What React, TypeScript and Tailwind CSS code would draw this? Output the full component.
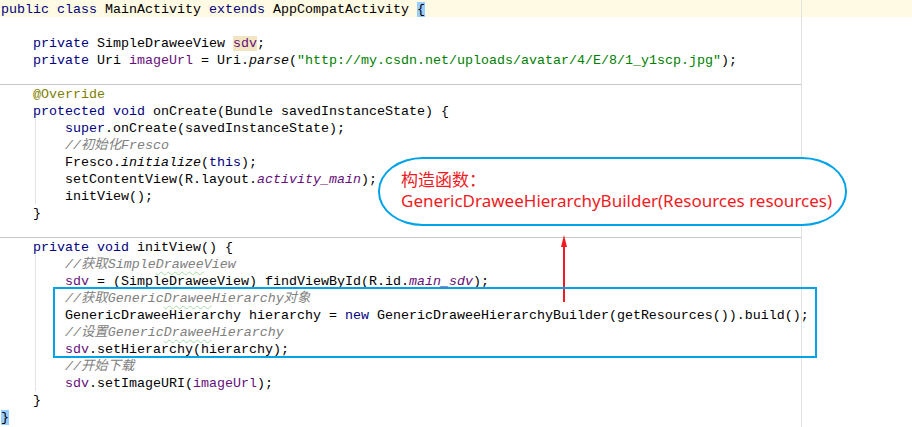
import type { ReactNode } from "react";

// IntelliJ-style colours
const K = ({ children }: { children: ReactNode }) => <span className="text-[#000080]">{children}</span>;
const F = ({ children }: { children: ReactNode }) => <span className="text-[#660e7a]">{children}</span>;
const SF = ({ children }: { children: ReactNode }) => <span className="text-[#660e7a] italic">{children}</span>;
const It = ({ children }: { children: ReactNode }) => <span className="italic">{children}</span>;
const S = ({ children }: { children: ReactNode }) => <span className="text-[#008000]">{children}</span>;
const C = ({ children }: { children: ReactNode }) => <span className="text-[#808080] italic">{children}</span>;
const W = ({ children }: { children: ReactNode }) => (
  <span className="underline decoration-wavy decoration-[#a8d8a8] decoration-1 underline-offset-[3px]">{children}</span>
);

function Line({ children, className = "" }: { children?: ReactNode; className?: string }) {
  return <div className={`h-[17px] pt-[2px] leading-[15px] whitespace-pre pl-px ${className}`}>{children}</div>;
}

function Sep() {
  return <div className="h-[17px] w-[802px] border-b border-[#c8c8c8]" />;
}

export default function App() {
  return (
    <div className="relative w-[912px] h-[427px] overflow-hidden bg-white text-black text-[13.33px] font-['Liberation_Mono','Noto_Sans_CJK_SC',monospace]">
      <div className="flex flex-col">
        <Line className="bg-[#fffae3]">
          <K>public</K> <K>class</K> MainActivity <K>extends</K> AppCompatActivity <span className="bg-[#99ccff]">{"{"}</span>
        </Line>
        <Line />
        <Line>
          {"    "}<K>private</K> SimpleDraweeView <span className="bg-[#f2e6c2] text-[#660e7a]">sdv</span>;
        </Line>
        <Line>
          {"    "}<K>private</K> Uri <F>imageUrl</F> = Uri.<It>parse</It>(<S>"http://my.csdn.net/uploads/avatar/4/E/8/1_y1scp.jpg"</S>);
        </Line>
        <Sep />
        <Line>
          {"    "}<span className="text-[#808000]">@Override</span>
        </Line>
        <Line>
          {"    "}<K>protected</K> <K>void</K> onCreate(Bundle savedInstanceState) {"{"}
        </Line>
        <Line>
          {"        "}<K>super</K>.onCreate(savedInstanceState);
        </Line>
        <Line>
          {"        "}<C>//初始化Fresco</C>
        </Line>
        <Line>
          {"        "}Fresco.<It>initialize</It>(<K>this</K>);
        </Line>
        <Line>
          {"        "}setContentView(R.layout.<SF>activity_main</SF>);
        </Line>
        <Line>{"        "}initView();</Line>
        <Line>{"    }"}</Line>
        <Sep />
        <Line>
          {"    "}<K>private</K> <K>void</K> initView() {"{"}
        </Line>
        <Line>
          {"        "}<C>//获取Simple<W>Drawee</W>View</C>
        </Line>
        <Line>
          {"        "}<F>sdv</F> = (SimpleDraweeView) findViewById(R.id.<SF>main_sdv</SF>);
        </Line>
        <Line>
          {"        "}<C>//获取Generic<W>Drawee</W>Hierarchy对象</C>
        </Line>
        <Line>
          {"        "}GenericDraweeHierarchy hierarchy = <K>new</K> GenericDraweeHierarchyBuilder(getResources()).build();
        </Line>
        <Line>
          {"        "}<C>//设置Generic<W>Drawee</W>Hierarchy</C>
        </Line>
        <Line>
          {"        "}<F>sdv</F>.setHierarchy(hierarchy);
        </Line>
        <Line>
          {"        "}<C>//开始下载</C>
        </Line>
        <Line>
          {"        "}<F>sdv</F>.setImageURI(<F>imageUrl</F>);
        </Line>
        <Line>{"    }"}</Line>
        <Line>
          <span className="bg-[#99ccff]">{"}"}</span>
        </Line>
      </div>

      {/* print margin */}
      <div className="absolute left-[801px] top-0 h-full w-px bg-[#e2e2e2]" />
      {/* indent guides */}
      <div className="absolute left-[35px] top-[119px] h-[85px] w-px bg-[#e4e4e4]" />
      <div className="absolute left-[35px] top-[255px] h-[136px] w-px bg-[#e4e4e4]" />

      {/* callout */}
      <div className="absolute left-[378px] top-[157px] w-[469px] h-[69px] rounded-[45px/34px] border-2 border-[#00a2e8] bg-white flex flex-col justify-center pl-[21px] pb-[3px] text-[17px] leading-[21px] text-[#ed1c24] font-['Noto_Sans','Noto_Sans_CJK_SC',sans-serif]">
        <div>构造函数：</div>
        <div>GenericDraweeHierarchyBuilder(Resources resources)</div>
      </div>

      <svg className="absolute left-[558px] top-[234px]" width="12" height="70" viewBox="0 0 12 70">
        <polygon points="6,1 3,13 9,13" fill="#ed1c24" />
        <rect x="5" y="10" width="2" height="58" fill="#ed1c24" />
      </svg>

      <div className="absolute left-[53px] top-[287px] w-[764px] h-[71px] border-2 border-[#00a2e8]" />
    </div>
  );
}
